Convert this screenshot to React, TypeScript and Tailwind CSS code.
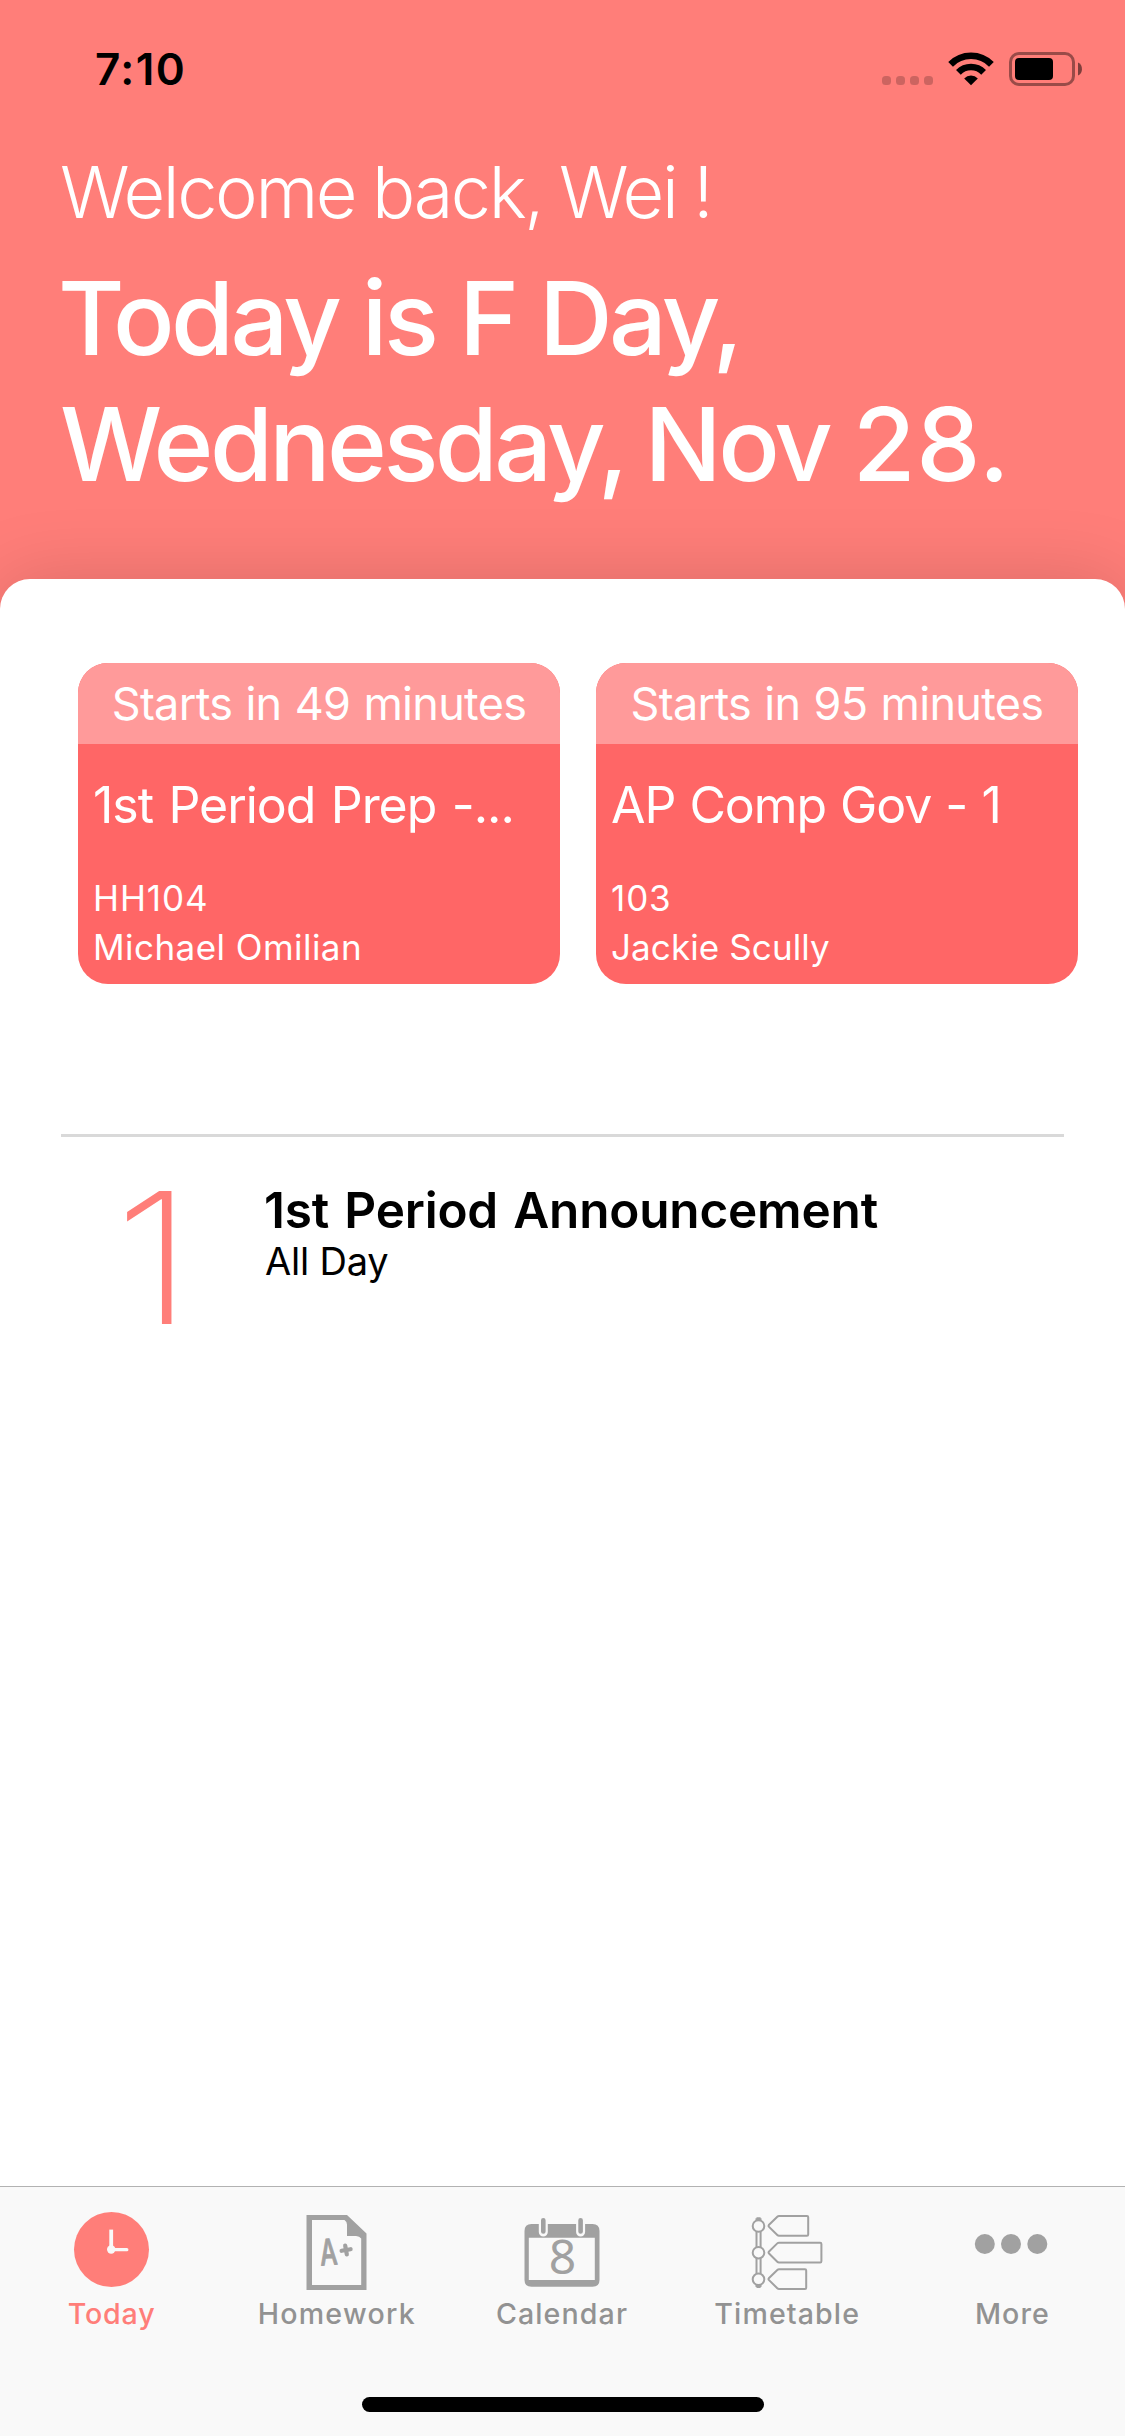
import React from "react";

function Wifi() {
  return (
    <svg className="h-[34px] w-[48px]" viewBox="0 0 48 34">
      <g fill="none" stroke="#000" strokeWidth="6.6">
        <path d="M3.6 12.4 A28.5 28.5 0 0 1 44.4 12.4" />
        <path d="M11.4 20.4 A17.5 17.5 0 0 1 36.6 20.4" />
      </g>
      <path d="M24 33.2 L17.2 26.4 A9.6 9.6 0 0 1 30.8 26.4 Z" fill="#000" />
    </svg>
  );
}

function Battery() {
  return (
    <svg className="h-[34px] w-[74px]" viewBox="0 0 74 34">
      <rect x="1.5" y="1.5" width="63" height="31" rx="8.5" fill="none" stroke="#000" strokeOpacity="0.4" strokeWidth="3" />
      <rect x="6" y="6" width="38" height="22" rx="4" fill="#000" />
      <path d="M69 10.5 C74.3 12.5 74.3 21.5 69 23.5 Z" fill="#000" fillOpacity="0.5" />
    </svg>
  );
}

function StatusBar() {
  return (
    <div className="flex h-[138px] items-center justify-between pl-[95px] pr-[42px]">
      <div className="text-[44px] font-semibold leading-none tracking-[1.4px] text-black">7:10</div>
      <div className="flex h-[34px] items-end">
        <div className="mr-3.5 flex gap-[5px] pb-px">
          {[0, 1, 2, 3].map((dot) => (
            <span key={dot} className="size-[9px] rounded-[3.5px] bg-black/20" />
          ))}
        </div>
        <div className="mr-3.5">
          <Wifi />
        </div>
        <Battery />
      </div>
    </div>
  );
}

function ClassCard({ starts, title, titleStyle, room, teacher, teacherStyle }: { starts: string; title: string; titleStyle: string; room: string; teacher: string; teacherStyle: string }) {
  return (
    <article className="h-[321px] w-[482px] shrink-0 overflow-hidden rounded-[30px] bg-[#ff6666] text-white">
      <div className="flex h-[81px] items-center justify-center bg-[#ff9a9a] text-[45px] leading-none tracking-[-0.7px] [word-spacing:1.2px]">{starts}</div>
      <div className="pl-[15px] pt-[31px]">
        <h2 className={`whitespace-nowrap text-[50px] leading-[60px] ${titleStyle}`}>{title}</h2>
        <p className="mt-[39px] text-[35px] leading-[49px] tracking-[0.9px]">{room}</p>
        <p className={`text-[35px] leading-[49px] ${teacherStyle}`}>{teacher}</p>
      </div>
    </article>
  );
}

function ClockIcon() {
  return (
    <svg className="size-20" viewBox="0 0 80 80">
      <circle cx="39.5" cy="37.5" r="37.5" fill="#ff7e79" />
      <g stroke="#f9f9f9" strokeLinecap="round">
        <path d="M39.2 17.6 V37.5" strokeWidth="3.8" strokeLinecap="butt" />
        <path d="M39.2 37.7 H54.8" strokeWidth="3.3" />
      </g>
      <circle cx="39.2" cy="37.5" r="4.2" fill="#f9f9f9" />
    </svg>
  );
}

function HomeworkIcon() {
  return (
    <svg className="size-20" viewBox="0 0 80 80">
      <path fillRule="evenodd" fill="#a1a1a1" d="M9.5 3 H50 L69.5 21.5 V78 H9.5 Z M15 8 V73 H64.2 V26.5 Q62.5 24 59 24 H50 V12.5 Q50 9.5 47.5 8 Z" />
      <g transform="translate(23.8 53.4) rotate(-4) scale(0.68 1)">
        <text fontFamily="Inter, sans-serif" fontSize="36" fontWeight="500" letterSpacing="0" fill="#a1a1a1" stroke="#a1a1a1" strokeWidth="1" strokeLinejoin="round">A</text>
      </g>
      <g stroke="#a1a1a1" strokeWidth="4.2" strokeLinecap="round">
        <path d="M44.6 38.8 L53.6 37.2" />
        <path d="M48.2 33.6 L49.8 42.4" />
      </g>
    </svg>
  );
}

function CalendarIcon() {
  return (
    <svg className="size-20" viewBox="0 0 80 80">
      <path fillRule="evenodd" fill="#a1a1a1" d="M9.5 12 H70.5 Q77.5 12 77.5 19 V68 Q77.5 74.8 70.5 74.8 H9.5 Q2.5 74.8 2.5 68 V19 Q2.5 12 9.5 12 Z M6.8 25.7 V68 H72.8 V25.7 Z" />
      <g strokeLinecap="round">
        <path d="M21.3 9 V20 M58.6 9 V20" stroke="#f9f9f9" strokeWidth="9" />
        <path d="M21.3 8.2 V19.4 M58.6 8.2 V19.4" stroke="#a1a1a1" strokeWidth="4.6" />
      </g>
      <text x="40.6" y="62.4" textAnchor="middle" fontFamily="Noto Sans, sans-serif" fontSize="48" fontWeight="400" letterSpacing="0" fill="#a1a1a1">8</text>
    </svg>
  );
}

function TimetableIcon() {
  return (
    <svg className="size-20" viewBox="0 0 80 80">
      <g fill="none" stroke="#a1a1a1" strokeWidth="2" strokeLinejoin="round">
        <path d="M9.5 20 V35 M13.6 20 V35 M9.5 46.5 V61.5 M13.6 46.5 V61.5" />
        <circle cx="11.5" cy="14" r="5.8" />
        <circle cx="11.5" cy="40.7" r="5.8" />
        <circle cx="11.5" cy="67.3" r="5.8" />
        <path d="M32 4 H60 Q61.2 4 61.2 5.2 V22.5 Q61.2 23.7 60 23.7 H32 Q31 23.7 30.3 23 L21.8 14.6 Q21.2 13.8 21.8 13 L30.3 4.7 Q31 4 32 4 Z" />
        <path d="M32 30.7 H73.2 Q74.4 30.7 74.4 31.9 V49.2 Q74.4 50.4 73.2 50.4 H32 Q31 50.4 30.3 49.7 L21.8 41.3 Q21.2 40.5 21.8 39.7 L30.3 31.4 Q31 30.7 32 30.7 Z" />
        <path d="M32 57.3 H58 Q59.2 57.3 59.2 58.5 V75.8 Q59.2 77 58 77 H32 Q31 77 30.3 76.3 L21.8 67.9 Q21.2 67.1 21.8 66.3 L30.3 58 Q31 57.3 32 57.3 Z" />
      </g>
      <path d="M9.5 5.2 H13.6 V6.3 H14.5 V8.6 H8.5 V6.3 H9.5 Z M8.5 72.8 H14.5 V75 H13.6 V76 H9.5 V75 H8.5 Z" fill="#a1a1a1" />
    </svg>
  );
}

function MoreIcon() {
  return (
    <svg className="size-20" viewBox="0 0 80 80" fill="#a1a1a1">
      <circle cx="12.8" cy="32" r="10" />
      <circle cx="39" cy="32" r="10" />
      <circle cx="65.3" cy="32" r="10" />
    </svg>
  );
}

const tabs = [
  { label: "Today", icon: <ClockIcon />, style: "text-[#ff7e79] tracking-[0.85px]" },
  { label: "Homework", icon: <HomeworkIcon />, style: "text-[#929292] tracking-[1.25px]" },
  { label: "Calendar", icon: <CalendarIcon />, style: "text-[#929292] tracking-[1.1px]" },
  { label: "Timetable", icon: <TimetableIcon />, style: "text-[#929292] tracking-[1.1px]" },
  { label: "More", icon: <MoreIcon />, style: "text-[#929292] tracking-[1.05px]" },
];

export default function App() {
  return (
    <div className="flex h-[2436px] w-[1125px] flex-col overflow-hidden bg-[#ff7e79] font-['Inter',sans-serif]">
      <header className="h-[579px] shrink-0 text-white">
        <StatusBar />
        <p className="mt-3 pl-[60px] text-[72px] font-light leading-[84px] tracking-[-2.4px] [word-spacing:-1px]">Welcome back, Wei !</p>
        <h1 className="mt-[21px] text-[102px] font-medium leading-[126px]">
          <span className="block pl-[58px] tracking-[-3.6px]">Today is F Day,</span>
          <span className="block pl-[60px] tracking-[-3.6px] [word-spacing:-3px]">Wednesday, Nov <span className="pl-[3px] tracking-[0.5px]">28.</span></span>
        </h1>
      </header>

      <main className="flex-1 rounded-t-[30px] bg-white pt-[84px] shadow-[0_0_75px_rgba(0,0,0,0.15)]">
        <section className="flex gap-9 pl-[78px]">
          <ClassCard starts="Starts in 49 minutes" title="1st Period Prep -..." titleStyle="tracking-[-1.05px] [word-spacing:2.5px]" room="HH104" teacher="Michael Omilian" teacherStyle="tracking-[0.45px]" />
          <ClassCard starts="Starts in 95 minutes" title="AP Comp Gov - 1" titleStyle="tracking-[-1.1px] [word-spacing:1.2px]" room="103" teacher="Jackie Scully" teacherStyle="tracking-[0.1px]" />
        </section>
        <section className="ml-[61px] mt-[150px] flex w-[1003px] border-t-[3px] border-[#d9d9d9]">
          <div className="w-[203px] pl-[53px] pt-[31px] text-[183px] font-extralight leading-[180px] text-[#ff7e79]">
            <span className="inline-block origin-left scale-x-[1.14]">1</span>
          </div>
          <div className="pt-[43px] text-black">
            <h3 className="text-[49.5px] font-semibold leading-[60px] tracking-[-0.2px] [word-spacing:3px]">1st Period Announcement</h3>
            <p className="pl-px text-[38px] leading-[42px] tracking-[-0.2px]">All Day</p>
          </div>
        </section>
      </main>

      <footer className="flex h-[250px] shrink-0 flex-col border-t border-[#b2b2b2] bg-[#f9f9f9]">
        <nav className="-ml-px grid grid-cols-5 pt-[25px]">
          {tabs.map((tab) => (
            <button key={tab.label} className={`flex flex-col items-center text-[28.6px] font-medium leading-10 ${tab.style}`}>
              {tab.icon}
              <span className="mt-0.5">{tab.label}</span>
            </button>
          ))}
        </nav>
        <div className="mx-auto mb-6 mt-auto h-[15px] w-[402px] rounded-full bg-black" />
      </footer>
    </div>
  );
}
